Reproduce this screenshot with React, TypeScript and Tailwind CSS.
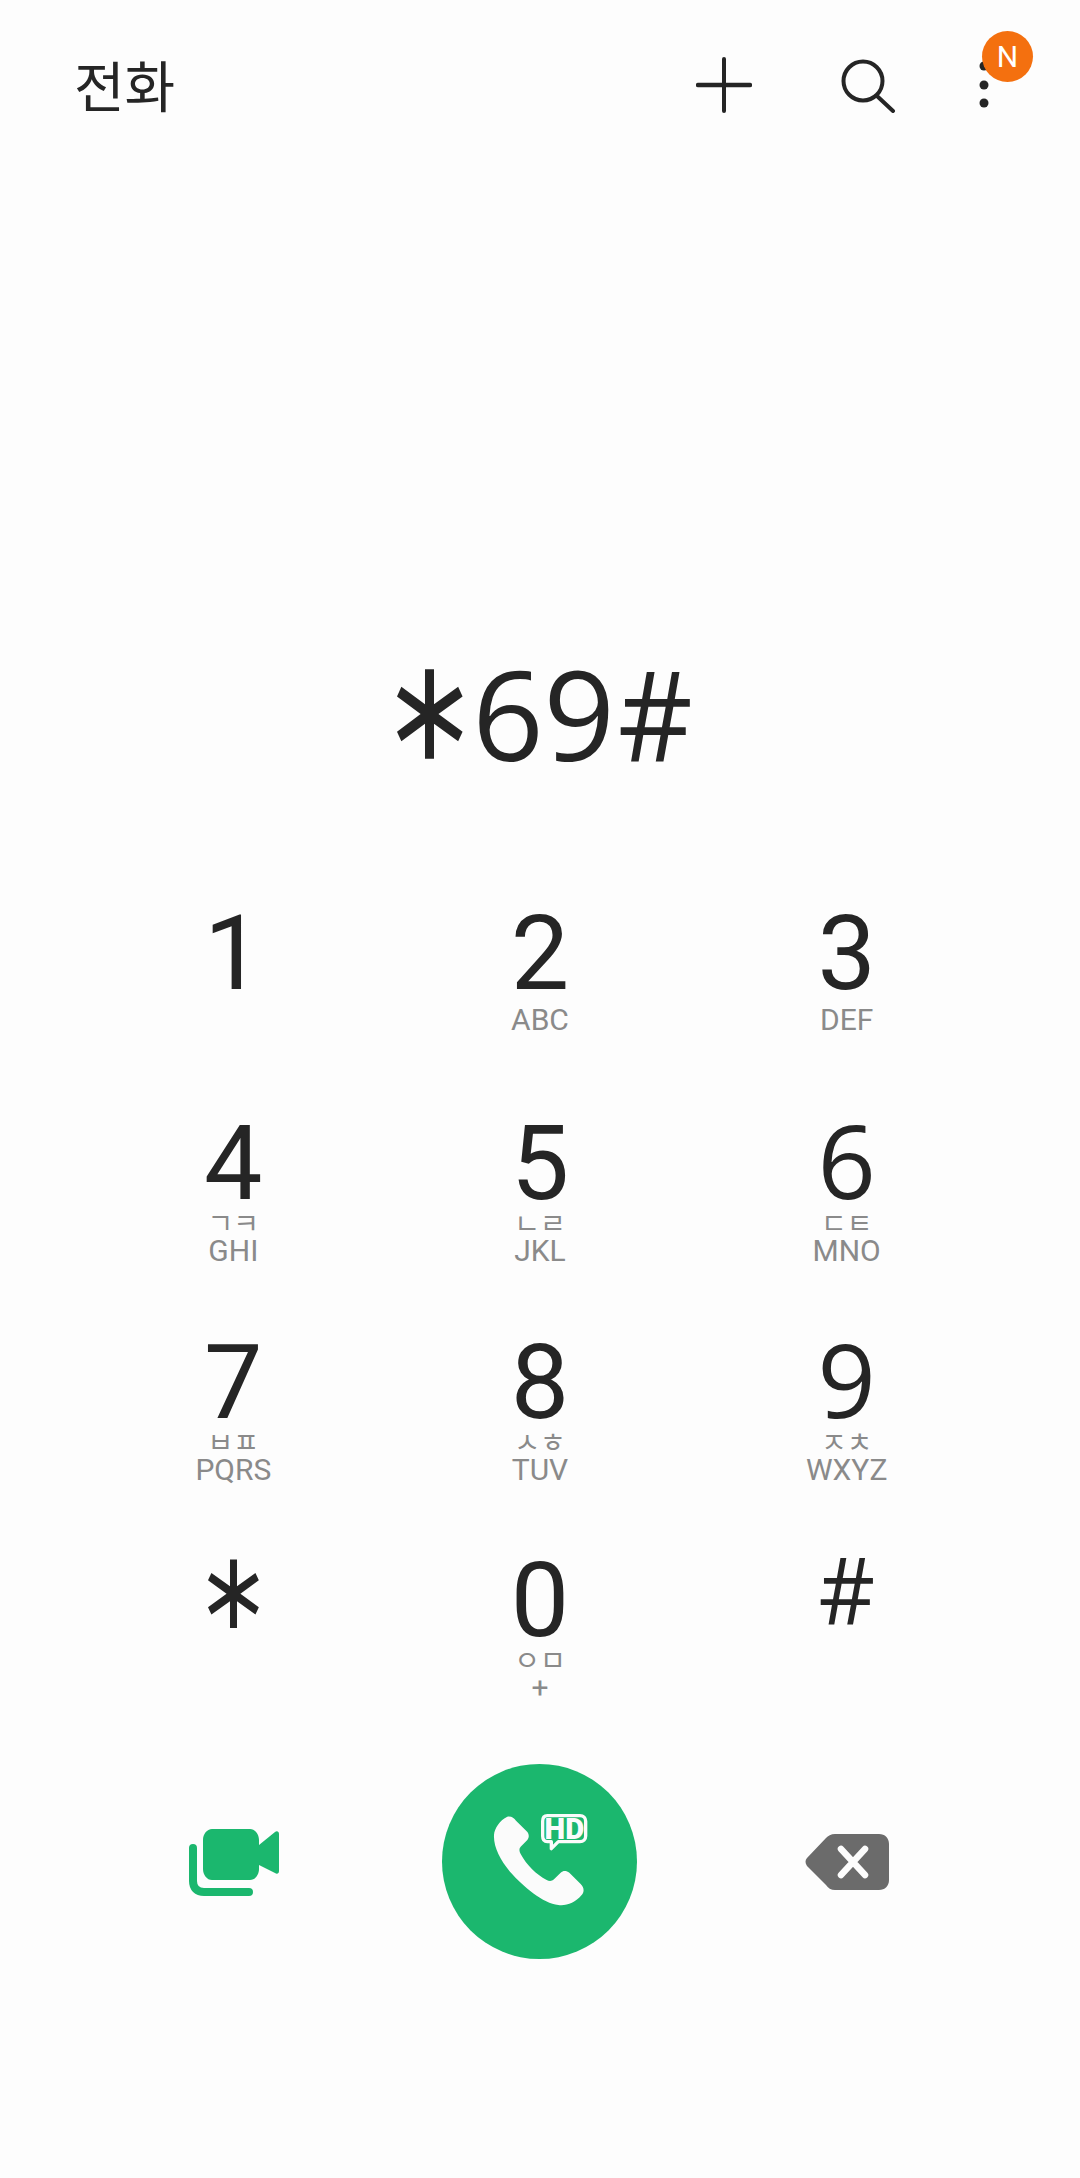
const roboto = "font-['Roboto',sans-serif]";
const jamo = "font-['Noto_Sans_CJK_KR',sans-serif]";

type KeyDef = { d: string; ko?: string; en?: string; h: string; noto?: boolean };

const keys: KeyDef[] = [
  { d: "1", h: "h-[210px]" },
  { d: "2", en: "ABC", h: "h-[210px]" },
  { d: "3", en: "DEF", h: "h-[210px]" },
  { d: "4", ko: "ㄱㅋ", en: "GHI", h: "h-[219px]" },
  { d: "5", ko: "ㄴㄹ", en: "JKL", h: "h-[219px]" },
  { d: "6", ko: "ㄷㅌ", en: "MNO", h: "h-[219px]", noto: true },
  { d: "7", ko: "ㅂㅍ", en: "PQRS", h: "h-[218px]" },
  { d: "8", ko: "ㅅㅎ", en: "TUV", h: "h-[218px]" },
  { d: "9", ko: "ㅈㅊ", en: "WXYZ", h: "h-[218px]", noto: true },
  { d: "*", h: "h-[200px]" },
  { d: "0", ko: "ㅇㅁ", en: "+", h: "h-[200px]" },
  { d: "#", h: "h-[200px]", noto: true },
];

function Key({ k }: { k: KeyDef }) {
  return (
    <div className={`flex flex-col items-center ${k.h}`}>
      <div className={`h-[104px] leading-[104px] text-[#252525] ${k.noto ? "text-[102px] font-['Open_Sans',sans-serif]" : `text-[104px] ${roboto}`}`}>
        {k.d === "*" ? (
          <span className="inline-block translate-x-[9px] translate-y-[-14px] rotate-90 scale-x-[1.45] scale-y-[1.15] font-['DejaVu_Sans',sans-serif] text-[84px]">⚹</span>
        ) : k.d === "#" ? (
          <span className="inline-block translate-y-[-12px] scale-x-[0.86] scale-y-[0.92]">#</span>
        ) : k.noto ? (
          <span className="inline-block translate-y-[-4px]">{k.d}</span>
        ) : (
          k.d
        )}
      </div>
      {k.ko && (
        <div className={`mt-[-6px] h-[24px] text-[28px] leading-[24px] text-[#8a8a8a] ${jamo}`}>{k.ko}</div>
      )}
      {k.en && (
        <div className={`h-[32px] text-[30px] leading-[32px] text-[#8a8a8a] ${roboto} ${k.ko ? "mt-[1px]" : "mt-[-2px]"}`}>{k.en}</div>
      )}
    </div>
  );
}

export default function App() {
  return (
    <div className="flex h-[2178px] w-[1080px] flex-col bg-[#fdfdfd]">
      <header className="flex h-[170px] items-center pl-[74px] pr-[91px]">
        <h1 className={`mb-[4px] text-[55px] font-normal leading-none text-[#252525] ${jamo}`}>전화</h1>
        <svg className="ml-auto" width="56" height="56" viewBox="0 0 56 56" fill="none" stroke="#252525" strokeLinecap="round">
          <path d="M28 2V54" strokeWidth="4" />
          <path d="M2 28H54" strokeWidth="4.5" />
        </svg>
        <svg className="ml-[88px]" width="56" height="56" viewBox="0 0 56 56" fill="none" stroke="#252525" strokeLinecap="round">
          <circle cx="23" cy="24" r="19.5" strokeWidth="4" />
          <path d="M37 39L53 54" strokeWidth="4" />
        </svg>
        <div className="relative ml-[83px] h-[56px] w-[10px]">
          <svg width="10" height="56" viewBox="0 0 10 56" fill="#252525">
            <circle cx="5" cy="9" r="4.5" />
            <circle cx="5" cy="28" r="4.5" />
            <circle cx="5" cy="46" r="4.5" />
          </svg>
          <div className={`absolute left-[3px] top-[-26px] flex h-[51px] w-[51px] items-center justify-center rounded-full bg-[#f4700f] text-[30px] text-white ${roboto}`}>N</div>
        </div>
      </header>

      <div className="mt-[478px] flex h-[130px] items-center justify-center text-[125px] leading-[130px] text-[#252525] font-['Open_Sans',sans-serif]">
        <span className="inline-block w-[88px] translate-x-[14px] translate-y-[1px] rotate-90 scale-x-[1.45] scale-y-[1.15] text-center font-['DejaVu_Sans',sans-serif] text-[110px]">⚹</span>
        <span>69</span>
        <span className="inline-block scale-x-[0.93]">#</span>
      </div>

      <div className="mt-[124px] grid grid-cols-3 px-[80px]">
        {keys.map((k) => (
          <Key key={k.d} k={k} />
        ))}
      </div>

      <div className="mt-[15px] grid grid-cols-3 items-center px-[80px]">
        <div className="flex justify-center pl-[2px]">
          <svg width="92" height="68" viewBox="0 0 92 68" fill="#1bb76e">
            <path d="M24 1H62C67 1 71 6 71 12V17L87 4C89 2.5 91 3.5 91 6V43C91 45.500 89 46.500 87 45L71 37V41C71 47 67 52 62 52H24C19 52 15 47 15 41V12C15 6 19 1 24 1Z" />
            <path d="M5 20V53C5 60 9 64 16 64H61" fill="none" stroke="#1bb76e" strokeWidth="8" strokeLinecap="round" />
          </svg>
        </div>
        <div className="flex justify-center">
          <div className="flex h-[195px] w-[195px] items-center justify-center rounded-full bg-[#1bb76e]">
            <svg width="195" height="195" viewBox="36 42 585 585">
              <path fill="#fbfbfb" d="M232 200C245 198 252 205 258 212L290 244C298 252 298 262 292 270L272 290C266 297 268 305 272 312C290 345 318 373 350 390C358 394 365 394 372 388L392 368C400 360 410 362 418 368L452 402C462 412 464 425 455 435C435 458 410 468 385 465C340 460 280 410 240 365C210 330 190 290 192 255C193 235 210 210 232 200Z" />
              <path fill="none" stroke="#fbfbfb" strokeWidth="10" strokeLinejoin="round" d="M352 197H450C460 197 467 204 467 214V258C467 268 460 275 450 275H385L364 296V275H352C343 275 338 268 338 258V214C338 204 343 197 352 197Z" />
              <text x="403" y="266" textAnchor="middle" fontFamily="Roboto, sans-serif" fontWeight="900" fontSize="88" fill="#fbfbfb">HD</text>
            </svg>
          </div>
        </div>
        <div className="flex justify-center">
          <svg width="86" height="58" viewBox="0 0 86 58">
            <path fill="#6b6b6b" d="M31 1H75C81 1 85 5 85 11V47C85 53 81 57 75 57H31C27 57 24 55 22 52L3 33C1 30 1 27 3 25L22 5C24 3 27 1 31 1Z" />
            <path d="M37 16L61 42M61 16L37 42" stroke="#fdfdfd" strokeWidth="6.500" strokeLinecap="round" />
          </svg>
        </div>
      </div>
    </div>
  );
}
